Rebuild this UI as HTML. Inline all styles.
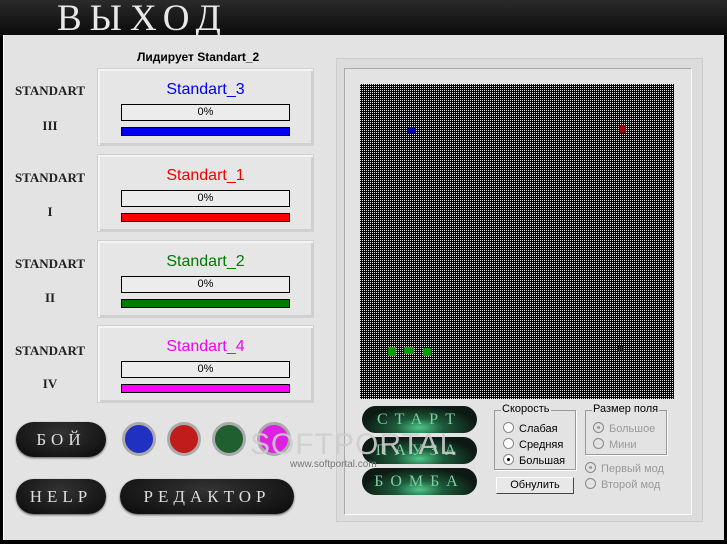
<!DOCTYPE html>
<html><head><meta charset="utf-8"><style>
*{margin:0;padding:0;box-sizing:border-box}
body{width:727px;height:544px;background:#000;position:relative;overflow:hidden;font-family:"Liberation Sans",sans-serif}
.top{position:absolute;left:0;top:0;width:727px;height:36px;background:linear-gradient(#2a2a2c,#0a0a0a)}
.title{position:absolute;left:57px;top:-3px;font:37px "Liberation Serif",serif;color:#e8e8e8;letter-spacing:8px}
.main{position:absolute;left:3px;top:35px;width:721px;height:505px;background:#e3e3e3;border-left:1px solid #fff}
.lead{position:absolute;left:137px;top:50px;font:bold 12px "Liberation Sans",sans-serif}
.lbl{position:absolute;left:0;width:100px;text-align:center;font:bold 13px "Liberation Serif",serif;color:#222}
.card{position:absolute;left:97px;width:217px;height:78px;background:#e6e6e6;border:1px solid #d0d0d0;box-shadow:inset 2px 2px 0 #f4f4f4,inset -2px -2px 0 #cfcfcf}
.card .n{position:absolute;left:0;width:100%;top:12px;text-align:center;font-size:16px}
.card .p{position:absolute;left:23px;top:35px;width:169px;height:17px;border:1px solid #000;background:#ececec;text-align:center;font-size:11px;line-height:15px}
.card .b{position:absolute;left:23px;top:58px;width:169px;height:9px;border:1px solid #000}
.pill{position:absolute;background:radial-gradient(ellipse at 50% 30%,#333,#0a0a0a);border-radius:18px;color:#ddd;font:17px "Liberation Serif",serif;text-align:center;letter-spacing:5px;box-shadow:0 1px 2px #555}
.dot{position:absolute;width:34px;height:34px;border-radius:50%;border:3px solid #aaa;top:422px}
.panel{position:absolute;left:336px;top:58px;width:367px;height:464px;background:#dcdcdc;border:1px solid #ccc}
.inner{position:absolute;left:344px;top:68px;width:348px;height:447px;border:1px solid #a8a8a8;border-right-color:#fff;border-bottom-color:#fff;background:#e3e3e3}
.grid{position:absolute;left:360px;top:84px;width:314px;height:315px}
.gb{position:absolute;left:362px;width:115px;height:27px;border-radius:14px;background:radial-gradient(ellipse at 50% 80%,#4fc78a 0,#1c5a3a 30%,#0d1a14 70%);color:#7ccf9e;font:16px "Liberation Serif",serif;text-align:center;letter-spacing:7px;line-height:27px}
.fs{position:absolute;border:1px solid #999;box-shadow:1px 1px 0 #fff}
.lg{position:absolute;background:#e3e3e3;font-size:11px;padding:0 1px;top:-8px}
.r{position:absolute;font-size:11px;white-space:nowrap}
.r i{display:inline-block;width:11px;height:11px;border-radius:50%;background:#fff;border:1px solid #888;vertical-align:-1px;margin-right:5px;position:relative}
.dis{color:#999}.dis i{background:#e3e3e3}
.sel i:after{content:"";position:absolute;left:3px;top:3px;width:3px;height:3px;border-radius:50%;background:#000}
.dis.sel i:after{background:#999}
</style></head><body>
<div class="top"><div class="title">ВЫХОД</div></div>
<div class="main"></div>
<div class="lead">Лидирует Standart_2</div>

<div class="lbl" style="top:83px">STANDART</div><div class="lbl" style="top:118px">III</div>
<div class="lbl" style="top:170px">STANDART</div><div class="lbl" style="top:204px">I</div>
<div class="lbl" style="top:256px">STANDART</div><div class="lbl" style="top:290px">II</div>
<div class="lbl" style="top:343px">STANDART</div><div class="lbl" style="top:376px">IV</div>

<div class="card" style="top:68px"><div class="n" style="color:#0000f0">Standart_3</div><div class="p">0%</div><div class="b" style="background:#0000f0"></div></div>
<div class="card" style="top:154px"><div class="n" style="color:#f00000">Standart_1</div><div class="p">0%</div><div class="b" style="background:#f00"></div></div>
<div class="card" style="top:240px"><div class="n" style="color:#007a00">Standart_2</div><div class="p">0%</div><div class="b" style="background:#007a00"></div></div>
<div class="card" style="top:325px"><div class="n" style="color:#f000f0">Standart_4</div><div class="p">0%</div><div class="b" style="background:#f0f"></div></div>

<div class="pill" style="left:16px;top:422px;width:90px;height:35px;line-height:35px">БОЙ</div>
<div class="pill" style="left:16px;top:479px;width:90px;height:35px;line-height:35px">HELP</div>
<div class="pill" style="left:120px;top:479px;width:174px;height:35px;line-height:35px">РЕДАКТОР</div>
<div class="dot" style="left:122px;background:#2030c0"></div>
<div class="dot" style="left:167px;background:#c01c1c"></div>
<div class="dot" style="left:212px;background:#206030"></div>
<div class="dot" style="left:257px;background:#e020e0"></div>

<div class="panel"></div>
<div class="inner"></div>
<svg class="grid" width="314" height="315"><defs><pattern id="p" width="2" height="2" patternUnits="userSpaceOnUse"><rect width="2" height="2" fill="#000"/><rect width="1" height="1" fill="#e8e8e8"/></pattern></defs><rect width="314" height="315" fill="url(#p)"/>
<g fill="#00a000"><rect x="28" y="263" width="8" height="9"/><rect x="44" y="263" width="10" height="7"/><rect x="63" y="264" width="8" height="8"/></g>
<rect x="48" y="43" width="7" height="6" fill="#0000a0"/><rect x="260" y="41" width="6" height="8" fill="#a00000"/><rect x="258" y="262" width="6" height="6" fill="#222"/></svg>

<div class="gb" style="top:406px">СТАРТ</div>
<div class="gb" style="top:437px">ПАУЗА</div>
<div class="gb" style="top:468px">БОМБА</div>

<div style="position:absolute;left:250px;top:428px;font-size:30px;color:rgba(205,205,205,.9);letter-spacing:1px">SOFTPORTAL</div>
<div style="position:absolute;left:290px;top:459px;font-size:10px;color:#777">www.softportal.com</div>

<div class="fs" style="left:494px;top:410px;width:82px;height:60px"><span class="lg" style="left:6px">Скорость</span></div>
<div class="r" style="left:503px;top:422px"><i></i>Слабая</div>
<div class="r" style="left:503px;top:438px"><i></i>Средняя</div>
<div class="r sel" style="left:503px;top:454px"><i></i>Большая</div>
<div style="position:absolute;left:496px;top:477px;width:78px;height:17px;background:#e8e8e8;border:1px solid;border-color:#fff #444 #444 #fff;font-size:11px;text-align:center;line-height:15px">Обнулить</div>

<div class="fs" style="left:585px;top:410px;width:82px;height:45px"><span class="lg" style="left:6px">Размер поля</span></div>
<div class="r dis sel" style="left:593px;top:422px"><i></i>Большое</div>
<div class="r dis" style="left:593px;top:438px"><i></i>Мини</div>
<div class="r dis sel" style="left:585px;top:462px"><i></i>Первый мод</div>
<div class="r dis" style="left:585px;top:478px"><i></i>Второй мод</div>
</body></html>
